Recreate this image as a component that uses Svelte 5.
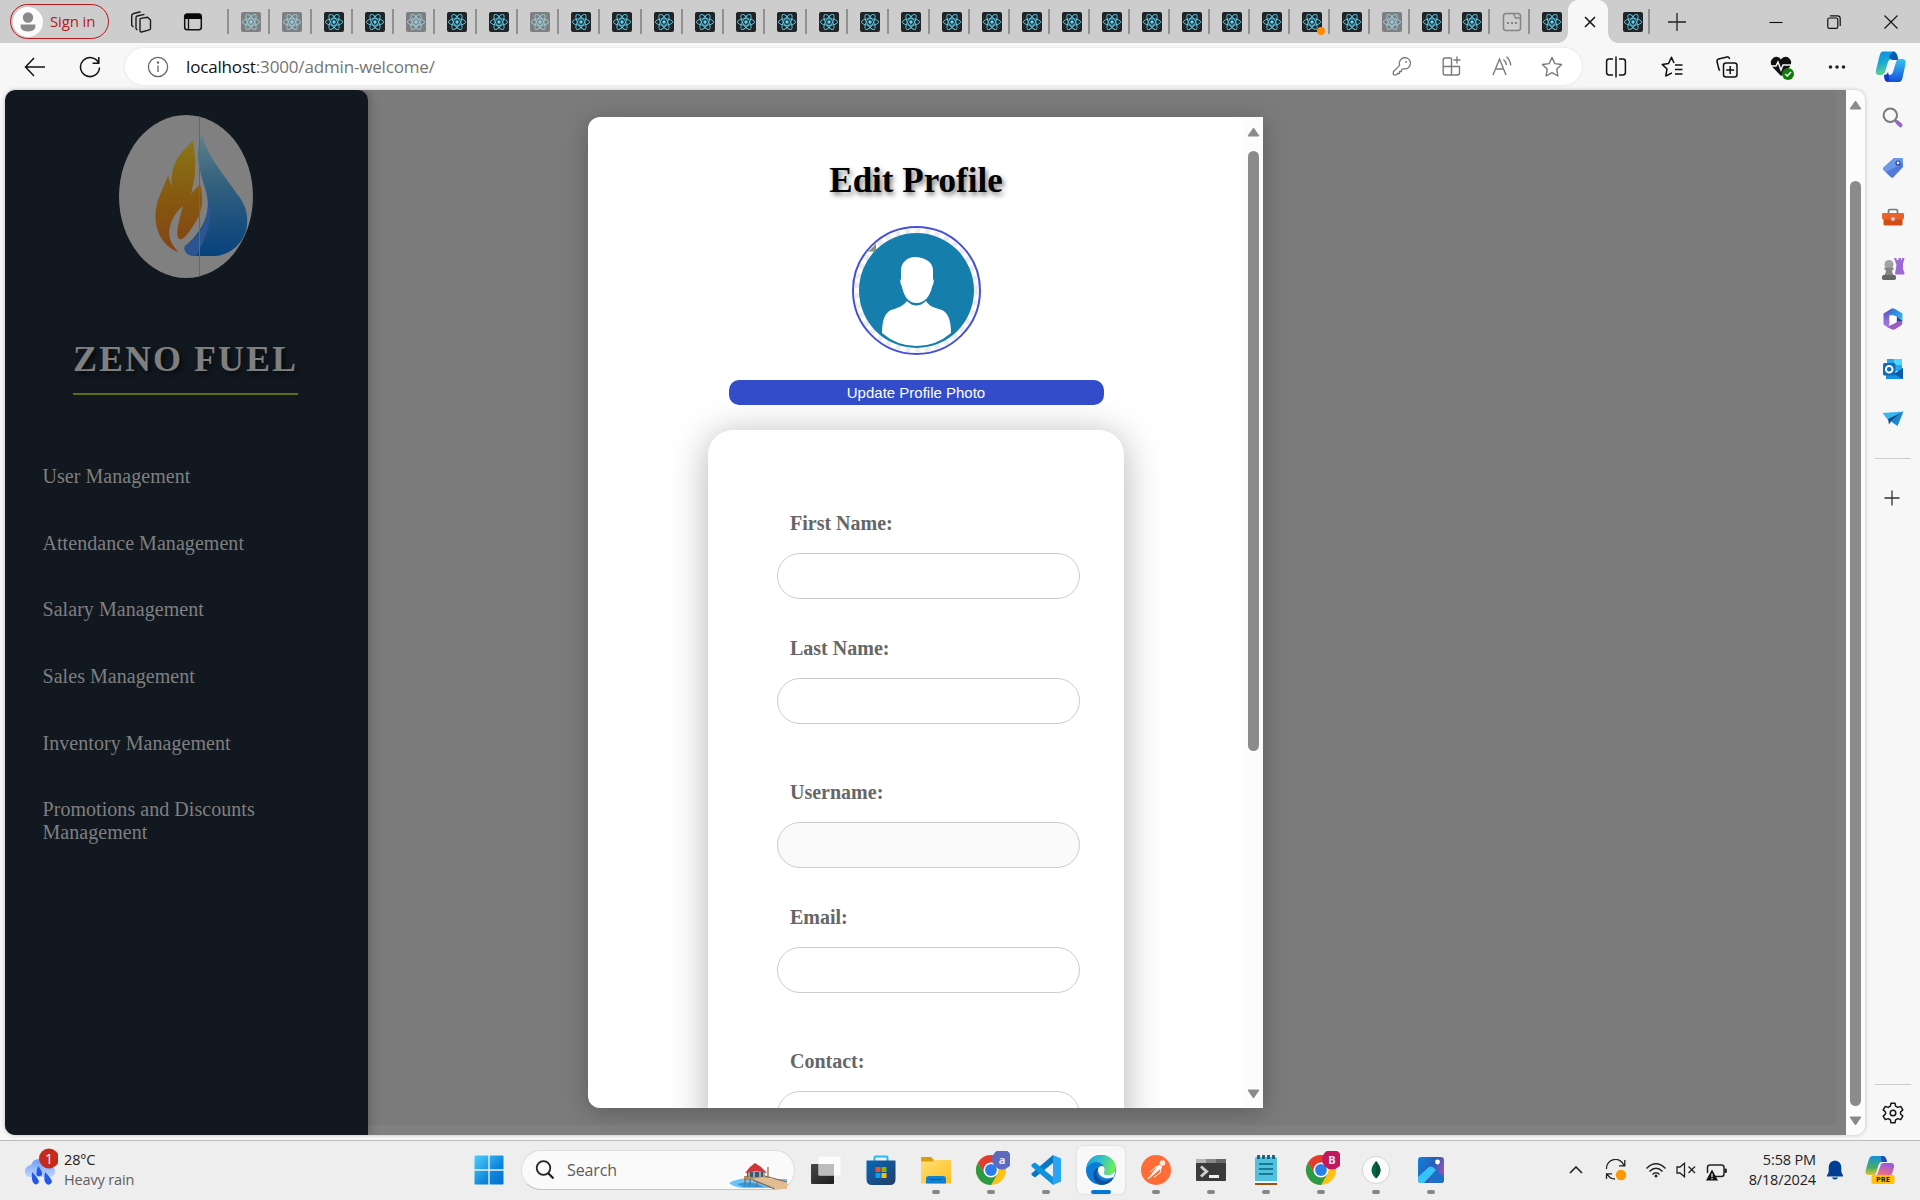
<script>
  const dimmed = new Set([0, 1, 4, 7, 28]);
  const tabs = Array.from({ length: 33 }, (_, i) => ({
    kind: i === 31 ? 'page' : 'react',
    dim: dimmed.has(i),
    dot: i === 26,
    wide: i < 17
  }));
  const menu = [
    'User Management',
    'Attendance Management',
    'Salary Management',
    'Sales Management',
    'Inventory Management',
    'Promotions and Discounts Management'
  ];
  const fields = [
    { label: 'First Name:' },
    { label: 'Last Name:', last: true },
    { label: 'Username:', readonly: true },
    { label: 'Email:', last: true },
    { label: 'Contact:' }
  ];
  const apps = ['taskview', 'store', 'explorer', 'chromeA', 'vscode', 'edge', 'postman', 'terminal', 'notepad', 'chromeB', 'mongo', 'photos'];
  const sideApps = ['search', 'tag', 'toolbox', 'chess', 'm365', 'outlook', 'plane'];
</script>

{#snippet react()}
  <svg width="20" height="20" viewBox="0 0 20 20">
    <rect width="20" height="20" rx="2" fill="#212327" />
    <g fill="none" stroke="#5ccbe6" stroke-width="0.9">
      <ellipse cx="10" cy="10" rx="8.6" ry="3.3" />
      <ellipse cx="10" cy="10" rx="8.6" ry="3.3" transform="rotate(60 10 10)" />
      <ellipse cx="10" cy="10" rx="8.6" ry="3.3" transform="rotate(120 10 10)" />
    </g>
    <circle cx="10" cy="10" r="1.7" fill="#61dafb" />
  </svg>
{/snippet}

{#snippet chrome(letter, color)}
  <svg width="38" height="38" viewBox="-19 -19 38 38">
    <circle r="15" fill="#fbc116" />
    <path d="M-13 -7.5A15 15 0 0 1 13 -7.5L0 -7.5L-6.5 3.7Z" fill="#e33b2e" />
    <path d="M-13 -7.5A15 15 0 0 0 0 15L6.5 3.7L-6.5 3.7Z" fill="#2a9a47" />
    <circle r="7.5" fill="#fff" />
    <circle r="5.9" fill="#2b7de9" />
    <circle cx="11" cy="-10.500" r="10" fill={color} />
    <text x="11" y="-6.500" text-anchor="middle" class="avatar-letter">{letter}</text>
  </svg>
{/snippet}

<div class="screen">
  <header class="tabbar">
    <div class="signin">
      <svg width="30" height="30" viewBox="0 0 30 30">
        <circle cx="15" cy="15" r="15" fill="#fbfbfb" />
        <circle cx="15" cy="10.5" r="5.2" fill="#8c8a89" />
        <path d="M7.5 17.5H22.5Q23 24.5 15 24.5Q7 24.5 7.5 17.5Z" fill="#8c8a89" />
      </svg>
      <span>Sign in</span>
    </div>
    <svg class="workspaces" width="24" height="24" viewBox="0 0 24 24" fill="none" stroke="#1b1b1b" stroke-width="1.4" stroke-linejoin="round">
      <path d="M11 9.5Q11 8.6 12 8.4L18.5 7.3L21.5 10V18.5Q21.5 19.6 20.4 19.8L12.5 22Q11 22.3 11 20.6Z" />
      <path d="M8.5 20L7 18.8V7.5Q7 6.3 8.3 6L15.5 4.4" />
      <path d="M4.5 17L2.7 15.5V5.5Q2.7 4.2 4 3.8L11.5 1.8" />
    </svg>
    <svg class="tabaction" width="20" height="20" viewBox="0 0 20 20">
      <rect x="1.7" y="2.2" width="16.6" height="15.6" rx="2.5" fill="none" stroke="#111" stroke-width="1.5" />
      <path d="M1.5 7V4Q1.5 1.6 4 1.6H16Q18.5 1.6 18.5 4V7Z" fill="#080808" />
      <path d="M5.5 7V18" stroke="#111" stroke-width="1.3" />
    </svg>
    <div class="tabs">
      {#each tabs as tab, i}
        <div class="tab" class:wide={tab.wide}>
          <div class="favicon" class:dim={tab.dim}>
            {#if tab.kind === 'react'}
              {@render react()}
            {:else}
              <svg width="20" height="20" viewBox="0 0 20 20" fill="none" stroke="#858585" stroke-width="1.5">
                <path d="M1.5 4Q1.5 1.5 4 1.5H11.5L13.5 6H18.5V16Q18.5 18.5 16 18.5H4Q1.5 18.5 1.5 16Z M12 1.5H16Q18.5 1.5 18.5 4V6" />
                <path d="M5 11h2M9 11h2M13 11h2" stroke-width="2" />
              </svg>
            {/if}
            {#if tab.dot}<i class="dot"></i>{/if}
          </div>
        </div>
      {/each}
      <div class="tab active">
        <svg width="12" height="12" viewBox="0 0 12 12" stroke="#111" stroke-width="1.5"><path d="M1 1L11 11M11 1L1 11" /></svg>
      </div>
      <div class="tab plain"><div class="favicon">{@render react()}</div></div>
      <div class="tab end">
        <svg width="18" height="18" viewBox="0 0 18 18" stroke="#222" stroke-width="1.3"><path d="M9 0V18M0 9H18" /></svg>
      </div>
    </div>
    <div class="winctl">
      <svg width="14" height="14" viewBox="0 0 14 14" stroke="#111" stroke-width="1.1"><path d="M0.5 7.5H13.5" /></svg>
      <svg width="14" height="14" viewBox="0 0 14 14" fill="none" stroke="#111" stroke-width="1.2"><rect x="0.8" y="3" width="10" height="10.3" rx="1.6" /><path d="M3 0.8H10.5Q13.2 0.8 13.2 3.5V11" /></svg>
      <svg width="14" height="14" viewBox="0 0 14 14" stroke="#111" stroke-width="1.1"><path d="M0.5 0.5L13.5 13.5M13.5 0.5L0.5 13.5" /></svg>
    </div>
  </header>

  <div class="toolbar">
    <svg class="back" width="22" height="20" viewBox="0 0 22 20" fill="none" stroke="#111" stroke-width="1.5"><path d="M21 10H1.5M10 1L1.5 10L10 19" /></svg>
    <svg class="reload" width="22" height="22" viewBox="0 0 22 22" fill="none" stroke="#111" stroke-width="1.5"><path d="M19.6 7A9.5 9.5 0 1 0 20.5 11.5M19.8 1V7.2H13.6" /></svg>
    <div class="address">
      <svg width="22" height="22" viewBox="0 0 22 22" fill="none" stroke="#666" stroke-width="1.3"><circle cx="11" cy="11" r="9.6" /><path d="M11 9.5V16" /><circle cx="11" cy="6.6" r="0.6" fill="#666" /></svg>
      <span class="url"><b>localhost</b>:3000/admin-welcome/</span>
      <div class="addr-icons">
        <svg width="20" height="20" viewBox="0 0 20 20" fill="none" stroke="#7a7a7a" stroke-width="1.3" stroke-linejoin="round"><path d="M12.5 1.5A6 6 0 0 1 18.5 7.2A5.6 5.6 0 0 1 11.5 12.7L9.5 13.8V15.5H7.5V17.5H5.5L4.5 18.8H2Q1.3 18.8 1.3 18V15.8L7.6 9.4A6 6 0 0 1 12.5 1.5Z" /><circle cx="14" cy="6" r="0.9" fill="#7a7a7a" stroke="none" /></svg>
        <svg width="20" height="20" viewBox="0 0 20 20" fill="none" stroke="#7a7a7a" stroke-width="1.4"><path d="M9.5 2H3Q1.2 2 1.2 4V17Q1.2 19 3 19H15.5Q17.5 19 17.5 17V10.5H1.2M9.5 2V19M15 0.5V7.5M11.5 4H18.5" /></svg>
        <svg width="20" height="20" viewBox="0 0 20 20" fill="none" stroke="#7a7a7a" stroke-width="1.4"><path d="M1 19L7.5 3L14 19M3.5 13H11.5M11.5 3.5Q14 5.5 14.3 9M14.5 0.8Q18.3 4 18.7 9.5" /></svg>
        <svg width="22" height="22" viewBox="0 0 22 22" fill="none" stroke="#7a7a7a" stroke-width="1.4" stroke-linejoin="round"><path d="M11 1.5L13.9 7.6L20.6 8.5L15.7 13.2L16.9 20L11 16.7L5.1 20L6.3 13.2L1.4 8.5L8.1 7.6Z" /></svg>
      </div>
    </div>
    <div class="tools">
      <svg width="22" height="22" viewBox="0 0 22 22" fill="none" stroke="#111" stroke-width="1.5"><path d="M8 3H4Q1.6 3 1.6 5.4V16.6Q1.6 19 4 19H8M14 3H18Q20.4 3 20.4 5.4V16.6Q20.4 19 18 19H14M11 0.5V21.5" /></svg>
      <svg width="22" height="22" viewBox="0 0 22 22" fill="none" stroke="#111" stroke-width="1.5" stroke-linejoin="round"><path d="M13 7L10.5 1.2L7.6 7.4L1.2 8.4L6 13L4.8 20L11 16.8M14 9H21.5M14 13.5H21.5M14 18H21.5" /></svg>
      <svg width="22" height="22" viewBox="0 0 22 22" fill="none" stroke="#111" stroke-width="1.5"><path d="M4 14.5L3 13.5L1 5.5Q0.7 3.5 2.5 3L11 0.9Q13 0.6 13.7 3M7.5 9.5Q7.5 7 10 7H18.5Q21 7 21 9.5V18.5Q21 21 18.5 21H10Q7.5 21 7.5 18.5ZM14.2 10V18M10.2 14H18.2" /></svg>
      <svg width="26" height="26" viewBox="0 0 26 26"><path d="M12 22L3 12.5Q1 9.5 2.3 6.3Q4 3 7.4 2.7Q10.5 2.8 12 5.5Q13.5 2.8 16.6 2.7Q20 3 21.7 6.3Q23 9.5 21 12.5Z" fill="#101010" /><path d="M1 12H7L9 8L12 16L14 11H22" fill="none" stroke="#f7f7f7" stroke-width="1.5" /><circle cx="19" cy="20" r="6" fill="#107c10" /><path d="M16.2 20L18.3 22L22 18" fill="none" stroke="#fff" stroke-width="1.5" /></svg>
      <svg width="18" height="6" viewBox="0 0 18 6" fill="#222"><circle cx="2.5" cy="3" r="1.8" /><circle cx="9" cy="3" r="1.8" /><circle cx="15.5" cy="3" r="1.8" /></svg>
      <svg class="cop" width="32" height="32" viewBox="0 0 32 32">
        <defs>
          <linearGradient id="cpA" x1="0" y1="0" x2="0.3" y2="1"><stop offset="0" stop-color="#0a8fe0" /><stop offset="0.5" stop-color="#19a7d8" /><stop offset="1" stop-color="#63d68c" /></linearGradient>
          <linearGradient id="cpB" x1="0" y1="0" x2="0" y2="1"><stop offset="0" stop-color="#35c4f2" /><stop offset="1" stop-color="#1450d8" /></linearGradient>
        </defs>
        <path d="M8 0.5H18Q21 0.5 22 4L23 8H17Q14 8 13 11L10 21Q9 24 6 24H4Q0 24 1 19L4.5 5Q5.5 0.5 8 0.5Z" fill="url(#cpA)" />
        <path d="M18 0.5Q21 0.5 22 4L23.5 9H18Q15 9 14 5Z" fill="#075ab3" />
        <path d="M24 31H13Q10 31 9.5 28L9 24H14Q17 24 18 21L21 11Q22 8 25 8H27Q31.5 8 30.5 13L27.5 27Q26.5 31 24 31Z" fill="url(#cpB)" />
        <path d="M9 24Q12 24 13 21L14 25Q15 31 12 30.5Q10 30 9 24Z" fill="#1037cf" />
      </svg>
    </div>
  </div>

  <div class="middle">
    <div class="viewport">
      <div class="page">
        <nav class="sidebar">
          <svg class="logo" width="134" height="163" viewBox="0 0 134 163">
            <defs>
              <clipPath id="logoClip"><ellipse cx="67" cy="81.5" rx="67" ry="81.5" /></clipPath>
              <linearGradient id="flame" x1="0" y1="0" x2="0" y2="1"><stop offset="0" stop-color="#8a7517" /><stop offset="0.55" stop-color="#85570f" /><stop offset="1" stop-color="#844316" /></linearGradient>
              <linearGradient id="drop" x1="0" y1="0" x2="0" y2="1"><stop offset="0" stop-color="#63848f" /><stop offset="0.4" stop-color="#34617e" /><stop offset="1" stop-color="#07427c" /></linearGradient>
            </defs>
            <g clip-path="url(#logoClip)">
              <rect width="134" height="163" fill="#808080" />
              <path d="M83 17C84 35 105 60 118 79C128 91 130 103 127 116C122 132 107 142 92 141H77C69 141 64 137 66 131C75 125 88 108 89 92C90 76 77 55 79 35Z" fill="url(#drop)" />
              <path d="M89 80C94 94 93 114 77 141C69 141 64 137 66 131C82 122 90 104 89 80Z" fill="#2a5590" />
              <path d="M74 26C76 42 79 52 72 79L81 69C85 83 84 98 74 111C69 119 64 126 60 124C56 120 60 105 64 91C54 99 48 113 51 124C53 130 57 134 59 137C43 131 34 113 37 94C39 81 45 73 49 60L53 73C51 52 58 40 74 26Z" fill="url(#flame)" />
              <path d="M80.5 0V163" stroke="#666" stroke-width="1" />
            </g>
          </svg>
          <h1>ZENO FUEL</h1>
          <ul>
            {#each menu as item}<li>{item}</li>{/each}
          </ul>
        </nav>
        <div class="backdrop">
          <section class="modal">
            <div class="modal-body">
              <h2>Edit Profile</h2>
              <svg class="avatar" width="129" height="129" viewBox="0 0 129 129">
                <circle cx="64.5" cy="64.5" r="63.5" fill="#fff" stroke="#4650d6" stroke-width="2" />
                <circle cx="64.5" cy="64.5" r="59.8" fill="none" stroke="#ececec" stroke-width="4.5" stroke-dasharray="5 5" />
                <circle cx="64.5" cy="64.5" r="57.5" fill="#167eac" />
                <path d="M63 31C72 31 81 36 81 44V53Q83 55 80 61C78 70 73 77 64.500 77C56 77 52 70 50 61Q47 55 49 53V44C49 37 55 31 63 31Z" fill="#fff" />
                <path d="M55 75Q64 84 74 75C78 81 83 82 90 84Q99 88 99 107Q84 120 64.5 120Q45 120 30 107Q30 88 39 84C46 82 51 80 55 75Z" fill="#fff" />
                <path d="M17 25L24 18V25Z" fill="#799b6d" /><path d="M23 18V25H16" stroke="#888" fill="none" stroke-width="1" />
              </svg>
              <button>Update Profile Photo</button>
              <form>
                {#each fields as f}
                  <div class="field" class:last={f.last}>
                    <span class="label">{f.label}</span>
                    <div class="input" class:readonly={f.readonly}></div>
                  </div>
                {/each}
              </form>
            </div>
            <div class="scroll modal-scroll">
              <svg width="13" height="10" viewBox="0 0 13 10"><path d="M6.5 1L12 9H1Z" fill="#8b8b8b" stroke="#8b8b8b" stroke-linejoin="round" /></svg>
              <div class="thumb"></div>
              <svg class="down" width="13" height="10" viewBox="0 0 13 10"><path d="M6.5 9L12 1H1Z" fill="#8b8b8b" stroke="#8b8b8b" stroke-linejoin="round" /></svg>
            </div>
          </section>
        </div>
      </div>
      <div class="scroll page-scroll">
        <svg width="13" height="10" viewBox="0 0 13 10"><path d="M6.5 1L12 9H1Z" fill="#8b8b8b" stroke="#8b8b8b" stroke-linejoin="round" /></svg>
        <div class="thumb"></div>
        <svg class="down" width="13" height="10" viewBox="0 0 13 10"><path d="M6.5 9L12 1H1Z" fill="#8b8b8b" stroke="#8b8b8b" stroke-linejoin="round" /></svg>
      </div>
    </div>

    <aside class="edgebar">
      {#each sideApps as app}
        <div class="side-cell">
          {#if app === 'search'}
            <svg width="22" height="22" viewBox="0 0 22 22" fill="none"><circle cx="8.3" cy="8.3" r="6.7" stroke="#7a7a7a" stroke-width="2" /><path d="M13 13L15.5 15.5" stroke="#777" stroke-width="2" /><path d="M15.3 15.3L18.500 18.300" stroke="#9a62cf" stroke-width="4" stroke-linecap="round" /></svg>
          {:else if app === 'tag'}
            <svg width="22" height="22" viewBox="0 0 22 22"><path d="M12 1H19.5Q21 1 21 2.5V10L11.5 20.2Q10 21.3 8.5 20L1.5 13Q0.5 11.5 1.8 10.3Z" fill="#527bd8" /><path d="M12 1H19.5Q21 1 21 2.5V6L4 15L1.5 12.5Q0.5 11.5 1.8 10.3Z" fill="#6c98e9" /><circle cx="16" cy="6" r="2" fill="#e8f0ff" stroke="#234090" stroke-width="1.2" /></svg>
          {:else if app === 'toolbox'}
            <svg width="24" height="22" viewBox="0 0 24 22"><path d="M7.5 7V4Q7.5 2.5 9 2.5H15Q16.5 2.5 16.5 4V7" fill="none" stroke="#777" stroke-width="1.7" /><path d="M2.5 11H21.5V17Q21.5 18.5 20 18.5H4Q2.5 18.5 2.5 17Z" fill="#d54b16" /><rect x="1" y="6" width="22" height="6.5" rx="1.4" fill="#e9622b" /><circle cx="12" cy="12" r="2.1" fill="#cfcfcf" /></svg>
          {:else if app === 'chess'}
            <svg width="24" height="24" viewBox="0 0 24 24"><path d="M13 1H15.5V3H17.5V1H20V3H21V1H23.5L22 7V12L23.5 16Q23.5 17.5 22 17.5H15Q13.5 17.5 14.5 14L15.5 8Z" fill="#9d6ad4" /><circle cx="8" cy="7.5" r="4.5" fill="#a2a2a2" /><path d="M3.5 10.5H12.5V13H11Q11 17 13 18.5H3Q5 17 5 13H3.5Z" fill="#858585" /><rect x="1" y="18" width="14" height="5" rx="1.8" fill="#666" /></svg>
          {:else if app === 'm365'}
            <svg width="22" height="24" viewBox="0 0 22 24">
              <defs>
                <linearGradient id="mA" x1="0" y1="0" x2="0" y2="1"><stop offset="0" stop-color="#4b56c4" /><stop offset="1" stop-color="#b07ae0" /></linearGradient>
                <linearGradient id="mB" x1="0" y1="0" x2="1" y2="1"><stop offset="0" stop-color="#2c6fd0" /><stop offset="1" stop-color="#3cc0f0" /></linearGradient>
              </defs>
              <path d="M11 1.200L7.500 8V15L7 19.500L5 20L1.500 17.500V6.500L9 2Z" fill="url(#mA)" />
              <path d="M9 2Q11 0.800 13 2L20.500 6.500V14L14.500 9.500L7.500 8Z" fill="url(#mB)" />
              <path d="M20.500 14Q20.500 17.500 19 18.500L13 22.200Q11 23.200 9 22L5 20L14.500 15.500V9.500Z" fill="#9a5cc4" />
              <path d="M20.500 14L14.500 9.500V14Z" fill="#25408c" />
              <path d="M11 8L14.8 10V14.2L11 16.2L7.4 14.2V10Z" fill="#fff" />
            </svg>
          {:else if app === 'outlook'}
            <svg width="22" height="22" viewBox="0 0 22 22"><rect x="5" y="1" width="15" height="12" fill="#28a8ea" /><path d="M20 1V7H12V1Z" fill="#50d9ff" /><path d="M4 12L12 16L21 10V21H4Z" fill="#1490df" /><path d="M21 10V21L12 16Z" fill="#0a5aa8" /><rect x="1" y="5" width="12.5" height="12.5" rx="1.5" fill="#0f6cbd" /><circle cx="7.2" cy="11.2" r="3.3" fill="none" stroke="#fff" stroke-width="2" /></svg>
          {:else}
            <svg width="22" height="18" viewBox="0 0 22 18"><path d="M0.5 3L21.5 1.5L6 10Z" fill="#35b6ee" /><path d="M21.5 1.5L15.5 16L9 11.5Z" fill="#1389d8" /><path d="M6 9L21.5 1.5L9 11.5L7 14.5Z" fill="#124f90" /></svg>
          {/if}
        </div>
      {/each}
      <hr />
      <svg class="add" width="16" height="16" viewBox="0 0 16 16" stroke="#333" stroke-width="1.3"><path d="M8 0.5V15.5M0.5 8H15.5" /></svg>
      <hr class="bottom" />
      <svg class="gear" width="22" height="22" viewBox="0 0 22 22" fill="none" stroke="#161616" stroke-width="1.5" stroke-linejoin="round"><path d="M9 1.2H13L13.6 4.2L15.8 5.4L18.7 4.4L20.8 7.9L18.5 10V12L20.8 14.1L18.7 17.6L15.8 16.6L13.6 17.8L13 20.8H9L8.4 17.8L6.2 16.6L3.3 17.6L1.2 14.1L3.5 12V10L1.2 7.9L3.3 4.4L6.2 5.4L8.4 4.2Z" /><circle cx="11" cy="11" r="2.8" /></svg>
    </aside>
  </div>

  <footer class="taskbar">
    <div class="weather">
      <svg width="36" height="40" viewBox="0 0 36 40">
        <defs><linearGradient id="cloud" x1="0" y1="0" x2="0" y2="1"><stop offset="0" stop-color="#6f9cf5" /><stop offset="1" stop-color="#bcd5ff" /></linearGradient></defs>
        <path d="M9 29Q3 29 3 23.500Q3 18 9 17Q11 11 17 11Q24 11 26 17Q33 18 33 23.500Q33 29 27 29Z" fill="url(#cloud)" />
        <path d="M16 18Q21 24 20 27Q17 29.500 14.5 27Q14 24 16 18ZM10 24Q17 31 17 34Q15 38 12 35.500Q9 33 10 24ZM23 24Q30 31 30 34Q28 38 24.500 36Q21 33 23 24Z" fill="#2458ea" />
        <circle cx="27" cy="10.500" r="10" fill="#c42b1c" />
        <text x="27" y="15.500" text-anchor="middle" class="badge-text">1</text>
      </svg>
      <div><span class="temp">28°C</span><span class="cond">Heavy rain</span></div>
    </div>
    <svg class="start" width="30" height="30" viewBox="0 0 30 30">
      <defs><linearGradient id="win" x1="0" y1="0" x2="1" y2="1"><stop offset="0" stop-color="#4cd0fb" /><stop offset="0.6" stop-color="#0f86dd" /><stop offset="1" stop-color="#0070cf" /></linearGradient></defs>
      <path d="M0.5 1.500Q0.5 0.500 1.500 0.500H14.300V14.300H0.500ZM15.700 0.500H28.500Q29.500 0.500 29.500 1.500V14.300H15.700ZM0.500 15.700H14.300V29.500H1.500Q0.500 29.500 0.500 28.500ZM15.700 15.700H29.500V28.500Q29.500 29.500 28.500 29.500H15.700Z" fill="url(#win)" />
    </svg>
    <div class="search">
      <svg width="20" height="20" viewBox="0 0 20 20" fill="none" stroke="#222"><circle cx="8.500" cy="8" r="6.800" stroke-width="1.800" /><path d="M13 13L18.500 18.500" stroke-width="2.300" /></svg>
      <span>Search</span>
      <svg class="pier" width="58" height="27" viewBox="0 0 58 27">
        <path d="M0 21Q10 15 24 17L58 17V26H14Q4 25 0 21Z" fill="#6fc3f4" />
        <path d="M8 22Q22 18 35 25H14Z" fill="#2f9ae4" />
        <path d="M15 14H38V18H15Z" fill="#b88a5c" />
        <path d="M18 10H36V15H18Z" fill="#33597f" />
        <path d="M20 10V15M25 10V15M31 10V15M35 10V15" stroke="#dfb98c" stroke-width="1.500" />
        <path d="M16 11L21 5L26 1L32 5L38 11Q27 8 16 11Z" fill="#d3343a" />
        <path d="M23 17L34 15L58 20V27H48Z" fill="#e3bd91" />
        <path d="M24 18L46 27M36 14L58 20M16 17V23M21 17V24M28 19V25M39 5V16" stroke="#8a6450" stroke-width="1.200" />
      </svg>
    </div>
    <div class="apps">
      {#each apps as app}
        <div class="app" class:current={app === 'edge'} class:running={app !== 'taskview' && app !== 'store'}>
          {#if app === 'taskview'}
            <svg width="32" height="30" viewBox="0 0 32 30"><defs><linearGradient id="tv" x1="0" y1="0" x2="1" y2="1"><stop offset="0" stop-color="#484848" /><stop offset="1" stop-color="#1c1c1c" /></linearGradient></defs><rect x="1" y="9" width="23" height="20" rx="1" fill="url(#tv)" /><rect x="8.500" y="1.500" width="22" height="19" rx="1" fill="#fff" opacity=".82" /><rect x="8.500" y="9" width="15.500" height="11.500" fill="#bcbcbc" /></svg>
          {:else if app === 'store'}
            <svg width="30" height="30" viewBox="0 0 30 30"><defs><linearGradient id="st" x1="0" y1="0" x2="1" y2="1"><stop offset="0" stop-color="#0868b8" /><stop offset="1" stop-color="#243b66" /></linearGradient></defs><path d="M8.500 7V2.500Q8.500 1.500 9.500 1.500H20.500Q21.500 1.500 21.500 2.500V7" fill="none" stroke="#27b8f3" stroke-width="2" /><path d="M0.500 5.500H29.500V24Q29.500 30 24 30H6Q0.500 30 0.500 24Z" fill="url(#st)" /><path d="M9.500 12H14.500V17H9.500Z" fill="#f25022" /><path d="M15.500 12H20.500V17H15.500Z" fill="#7fba00" /><path d="M9.500 18H14.500V23H9.500Z" fill="#00a4ef" /><path d="M15.500 18H20.500V23H15.500Z" fill="#ffb900" /></svg>
          {:else if app === 'explorer'}
            <svg width="30" height="28" viewBox="0 0 30 28"><defs><linearGradient id="fo" x1="0" y1="0" x2="1" y2="1"><stop offset="0" stop-color="#ffdf72" /><stop offset="1" stop-color="#fdbf24" /></linearGradient></defs><path d="M0 8V2Q0 1 1 1H10L13 4L11 8Z" fill="#dd9c0b" /><path d="M0 5.500H12L14 4H29Q30 4 30 5V26.500Q30 27.500 29 27.500H1Q0 27.500 0 26.500Z" fill="url(#fo)" /><path d="M5 27.500V23Q5 20 8 20H22Q25 20 25 23V27.500Z" fill="#1080cf" /><path d="M9 23.500H21" stroke="#075496" /></svg>
          {:else if app === 'chromeA'}
            {@render chrome('a', '#5c6bc0')}
          {:else if app === 'chromeB'}
            {@render chrome('B', '#c2185b')}
          {:else if app === 'vscode'}
            <svg width="30" height="30" viewBox="0 0 30 30"><path d="M22 0L30 3.500V26.500L22 30Z" fill="#29a5f1" /><path d="M22 0L22 8L4 22.500L0.500 20V18.500Z" fill="#0878c5" /><path d="M22 30L22 22L4 7.500L0.500 9.500V11.500Z" fill="#1093df" /></svg>
          {:else if app === 'edge'}
            <svg width="30" height="30" viewBox="0 0 30 30"><defs><linearGradient id="eg" x1="0" y1="0" x2="1" y2="0.300"><stop offset="0" stop-color="#1c9be0" /><stop offset="0.500" stop-color="#34c1c9" /><stop offset="1" stop-color="#6bea5b" /></linearGradient></defs><circle cx="15" cy="15" r="15" fill="#0b7bd5" /><path d="M0.500 13Q3 0 15 0Q27 0 30 12Q30 20 21 20Q17 20 18 17Q20 14 17 10Q12 5 6 8Q2 10 0.500 13Z" fill="url(#eg)" /><path d="M12 13Q8 21 15 25Q21 28 28 22Q24 30 15 30Q7 27 7.500 19Q8 14 12 13Z" fill="#114f9c" /><path d="M12 15Q12 10.500 17 11Q20 14 18 17Q17 20 21 20Q26 20.500 29.500 16L28 22Q20 25 15.500 21.500Q12 19 12 15Z" fill="#f7f7f7" /></svg>
          {:else if app === 'postman'}
            <svg width="30" height="30" viewBox="0 0 30 30"><circle cx="15" cy="15" r="15" fill="#ff6c37" /><circle cx="21.500" cy="8" r="2.800" fill="#ffe9de" /><path d="M18 10L21 12L14 18L7 24Z" fill="#fff" stroke="#fff" /><path d="M16 11L9 17M20 13L19 18L13 22" stroke="#fff" stroke-width="1" fill="none" /></svg>
          {:else if app === 'terminal'}
            <svg width="30" height="24" viewBox="0 0 30 24"><rect y="1" width="30" height="22" rx="1" fill="#3b3b3b" /><path d="M0 5V2Q0 1 1 1H10V5Z" fill="#b6b6b6" /><path d="M10 1H20V5H10Z" fill="#888" /><path d="M20 1H29Q30 1 30 2V5H20Z" fill="#686868" /><path d="M5 8.500L10.500 13.500L5 18.500" fill="none" stroke="#cfcfcf" stroke-width="3" /><path d="M13 18.500H23" stroke="#f0f0f0" stroke-width="3" /></svg>
          {:else if app === 'notepad'}
            <svg width="22" height="30" viewBox="0 0 22 30"><rect y="2" width="22" height="25" rx="1.500" fill="#52c0df" /><path d="M0 26H22V28H0Z" fill="#f5f5f5" /><path d="M0 28H22V30H0Z" fill="#a0500a" /><path d="M4 9H18M4 14H18M4 19H18" stroke="#0b6080" stroke-width="1.700" /><path d="M3.500 0V4M8.500 0V4M13.500 0V4M18.500 0V4" stroke="#125f78" stroke-width="2.800" /></svg>
          {:else if app === 'mongo'}
            <svg width="30" height="30" viewBox="0 0 30 30"><circle cx="15" cy="15" r="13.600" fill="#fbfbfb" stroke="#d5d5d5" /><path d="M15 6Q19.500 11 19.500 15.500Q19 20 15 23.500Q11 20 10.500 15.500Q10.500 11 15 6Z" fill="#00684a" /><path d="M15 6Q19.500 11 19.500 15.500Q19 20 15 23.500Z" fill="#0c4f3a" /></svg>
          {:else}
            <svg width="26" height="26" viewBox="0 0 26 26"><defs><linearGradient id="ph" x1="0" y1="0" x2="1" y2="0.400"><stop offset="0" stop-color="#1282da" /><stop offset="0.600" stop-color="#2460b9" /><stop offset="1" stop-color="#9351b5" /></linearGradient></defs><rect width="26" height="26" rx="3" fill="url(#ph)" /><path d="M12 10Q13.500 9 15 10L26 20V23Q26 26 23 26H13Z" fill="#1c70c7" /><path d="M0 20L11 10Q13.500 8.500 16 11L18 13L6 26H3Q0 26 0 23Z" fill="#35c4f5" /><circle cx="19.500" cy="5" r="2.400" fill="#fff" /></svg>
          {/if}
        </div>
      {/each}
    </div>
    <div class="tray">
      <svg class="chev" width="14" height="8" viewBox="0 0 14 8" fill="none" stroke="#222" stroke-width="1.600"><path d="M1 7L7 1L13 7" /></svg>
      <svg class="sync" width="22" height="22" viewBox="0 0 22 22" fill="none" stroke="#222" stroke-width="1.300"><path d="M1.500 10A9 9 0 0 1 19 6.500M19.800 1V6.800H14M10 20Q5 20 2.500 15.500M1.500 20V14.800H7" /><circle cx="16" cy="16" r="5.200" fill="#ff9800" stroke="none" /></svg>
      <svg class="wifi" width="22" height="18" viewBox="0 0 22 18" fill="none" stroke="#222" stroke-width="1.500"><path d="M1.500 7.500Q11 -2 20.500 7.500M4.500 10.500Q11 4 17.500 10.500M7.500 13.500Q11 10 14.500 13.500" /><circle cx="11" cy="15" r="1.500" fill="#222" stroke="none" /></svg>
      <svg class="vol" width="20" height="16" viewBox="0 0 20 16" fill="none" stroke="#222" stroke-width="1.300"><path d="M1 5H4L8.500 1.200V14.800L4 11H1ZM12.500 4.500L19 11M19 4.500L12.500 11" /></svg>
      <svg class="bat" width="22" height="18" viewBox="0 0 22 18"><path d="M9 13.500H15.500Q18 13.500 18 11V4.500Q18 2 15.500 2H4Q1.500 2 1.500 4.500V10" fill="none" stroke="#222" stroke-width="1.500" /><path d="M18.500 5.500H20Q21 5.500 21 7.700Q21 10 20 10H18.500Z" fill="#222" /><path d="M6 6.500L12 17.500H0Z" fill="#111" /><path d="M6 10.500V14M6 15V16.300" stroke="#fff" stroke-width="1.200" /></svg>
      <div class="clock"><span>5:58 PM</span><span>8/18/2024</span></div>
      <svg class="bell" width="18" height="20" viewBox="0 0 18 20" fill="#003f92"><path d="M9 0.500Q15 1 15.300 7.500V12L17 15.500V16.500H1V15.500L2.700 12V7.500Q3 1 9 0.500ZM6 17.500H12Q11.500 19.500 9 19.500Q6.500 19.500 6 17.500Z" /></svg>
      <svg class="copilot" width="30" height="30" viewBox="0 0 30 30">
        <defs>
          <linearGradient id="c1" x1="0" y1="0" x2="0" y2="1"><stop offset="0" stop-color="#198fe0" /><stop offset="0.600" stop-color="#46ac67" /><stop offset="1" stop-color="#e3c52d" /></linearGradient>
          <linearGradient id="c2" x1="0.600" y1="0" x2="0.200" y2="1"><stop offset="0" stop-color="#9857e8" /><stop offset="1" stop-color="#fb756b" /></linearGradient>
        </defs>
        <path d="M8 1H18Q21 1 22 7H17Q14.500 7 13.500 10L11 18Q10.500 20 7 20H4Q0 20 0.500 16L4 4Q5 1 8 1Z" fill="url(#c1)" />
        <path d="M16 1H18Q21 1 22 7H17Q16 5 16 1Z" fill="#2048c4" />
        <path d="M12 20L16 9Q17 8 19 8H26Q29.500 8 29 12L27 19L25 21H12Z" fill="url(#c2)" />
        <rect x="6.500" y="20" width="23" height="9" rx="2" fill="#ffc20a" />
        <text x="18" y="27.200" text-anchor="middle" class="pre">PRE</text>
      </svg>
    </div>
  </footer>
</div>

<style>
  :global(body) { margin: 0; overflow: hidden; }
  .screen { width: 1920px; height: 1200px; display: flex; flex-direction: column; overflow: hidden; background: #f7f7f7; font-family: 'Open Sans', 'Noto Sans', sans-serif; }
  svg { display: block; flex: none; }
  * { box-sizing: border-box; }

  .tabbar { height: 43px; flex: none; background: #cdcdcd; display: flex; align-items: center; }
  .signin { width: 99px; height: 35px; margin-left: 10px; border: 1.5px solid #b3191e; border-radius: 18px; display: flex; align-items: center; padding-left: 2px; gap: 7px; color: #b3191e; font-size: 15px; letter-spacing: -0.150px; white-space: nowrap; }
  .signin span { padding-bottom: 2px; }
  .workspaces { margin-left: 20px; }
  .tabaction { margin-left: 30px; }
  .tabs { display: flex; margin-left: 24px; height: 43px; }
  .tab { width: 40px; height: 43px; display: flex; align-items: center; background: linear-gradient(#919191, #919191) 0 9px / 2px 25px no-repeat; padding-left: 14px; }
  .tab.wide { width: 41.25px; }
  .tab.plain { background: none; }
  .tab.active { background: #f7f7f7; border-radius: 10px 10px 0 0; position: relative; padding-left: 16px; }
  .tab.active::before, .tab.active::after { content: ''; position: absolute; bottom: 0; width: 10px; height: 10px; }
  .tab.active::before { left: -10px; background: radial-gradient(circle at 0 0, #cdcdcd 9.5px, #f7f7f7 10px); }
  .tab.active::after { right: -10px; background: radial-gradient(circle at 100% 0, #cdcdcd 9.5px, #f7f7f7 10px); }
  .tab.plain { padding-left: 15px; }
  .tab.end { padding-left: 20px; }
  .favicon { position: relative; }
  .favicon.dim { opacity: 0.45; }
  .dot { position: absolute; right: -3px; bottom: -3px; width: 8px; height: 8px; border-radius: 50%; background: #ff8c00; }
  .winctl { margin-left: auto; margin-right: 22px; display: flex; gap: 43.500px; }

  .toolbar { height: 47px; flex: none; display: flex; align-items: center; padding-top: 0; }
  .back { margin-left: 24px; }
  .reload { margin-left: 33px; }
  .address { margin-left: 24px; width: 1461px; height: 37px; border-radius: 19px; background: #fff; box-shadow: 0 0 3px #ddd; display: flex; align-items: center; padding-left: 22px; }
  .url { margin-left: 17px; font-size: 17px; letter-spacing: -0.160px; color: #747474; white-space: nowrap; }
  .url b { font-weight: 400; color: #111; }
  .addr-icons { margin-left: auto; margin-right: 5px; display: flex; }
  .addr-icons svg { margin: 0 15px; }
  .addr-icons svg:last-child { margin: 0 14px; }
  .tools { margin-left: 7px; display: grid; grid-template-columns: repeat(6, 55.200px); justify-items: center; align-items: center; }
  .cop { margin-right: 2px; }

  .middle { flex: none; height: 1050px; display: flex; }
  .viewport { margin-left: 5px; width: 1860px; height: 1045px; border-radius: 10px; overflow: hidden; display: flex; box-shadow: 0 0 4px #bbb; }
  .page { width: 1841px; background: #7b7b7b; display: flex; border-right: 10px solid #7f7f7f; border-bottom: 10px solid #808080; height: 1045px; }
  .sidebar { width: 363px; height: 1045px; flex: none; background: #111820; border-radius: 10px 10px 0 0; box-shadow: 0 0 12px rgba(0, 0, 0, 0.300); display: flex; flex-direction: column; align-items: center; color: #7f7f7f; font-family: 'Liberation Serif', serif; }
  .logo { margin: 25px 2px 0 0; }
  h1 { margin: 60px 2px 0 0; height: 57px; border-bottom: 2px solid #5f6c14; font-size: 36px; line-height: 42px; letter-spacing: 2px; white-space: nowrap; text-shadow: 3px 3px 5px rgba(0, 0, 0, 0.600); }
  ul { list-style: none; margin: 70px 0 0; padding: 0 68px 0 37.500px; width: 100%; display: flex; flex-direction: column; gap: 43.700px; font-size: 20px; letter-spacing: 0.050px; line-height: 23px; }
  .backdrop { flex: 1; padding: 27px 0 0 220px; }
  .modal { width: 675px; height: 991px; background: #fff; border-radius: 12px 0 0 12px; box-shadow: 0 4px 24px rgba(0, 0, 0, 0.250); display: flex; overflow: hidden; }
  .modal-body { width: 656px; overflow: hidden; display: flex; flex-direction: column; align-items: center; }
  h2 { margin: 43px 0 0; font: bold 35px/42px 'Liberation Serif', serif; font-variant-ligatures: none; color: #000; text-shadow: 2px 3px 5px rgba(0, 0, 0, 0.500); white-space: nowrap; }
  .avatar { margin-top: 24px; }
  button { margin-top: 25px; width: 375px; height: 25px; border: 0; padding: 0; border-radius: 10px; background: #334cc9; color: #fff; font: 15px/25px 'Liberation Sans', sans-serif; flex: none; }
  form { margin-top: 25px; width: 416px; height: 900px; flex: none; border-radius: 25px; background: #fff; box-shadow: 0 5px 38px rgba(0, 0, 0, 0.300); padding: 82px 0 0 69px; }
  .field { height: 125px; }
  .field.last { height: 144px; }
  .label { display: block; padding-left: 13px; font: bold 20px/23px 'Liberation Serif', serif; color: #666; }
  .input { margin-top: 18px; width: 303px; height: 46px; border: 1.250px solid #ccc; border-radius: 25px; }
  .input.readonly { background: #fafafa; }

  .scroll { width: 19px; flex: none; background: #fcfcfc; display: flex; flex-direction: column; align-items: center; }
  .thumb { width: 11px; border-radius: 6px; background: #8b8b8b; }
  .scroll > svg:first-child { margin-top: 10px; }
  .modal-scroll .thumb { margin-top: 14px; height: 600px; }
  .modal-scroll .down { margin-top: auto; margin-bottom: 9px; }
  .page-scroll .thumb { margin-top: 71px; height: 925px; }
  .page-scroll .down { margin-top: auto; margin-bottom: 9px; }

  .edgebar { width: 55px; height: 1050px; display: flex; flex-direction: column; align-items: center; padding-top: 3px; }
  .side-cell { height: 50.200px; width: 55px; flex: none; display: grid; place-items: center; }
  hr { margin: 14px 0 0; width: 36px; height: 1px; border: 0; background: #ccc; flex: none; }
  .add { margin: 31px 2px 0 0; }
  hr.bottom { margin-top: auto; }
  .gear { margin: 17px 0 16px; }

  .taskbar { height: 60px; flex: none; border-top: 1px solid #bbb; background: #eee; display: flex; align-items: center; padding-bottom: 1px; }
  .weather { margin-left: 22px; width: 452px; display: flex; align-items: center; gap: 6px; }
  .weather > svg { margin-top: -5px; }
  .weather div { display: flex; flex-direction: column; font-size: 14.500px; line-height: 20px; letter-spacing: -0.150px; padding-bottom: 1px; }
  .temp { color: #222; }
  .cond { color: #5d5d5d; }
  .badge-text { font-size: 14px; fill: #fff; }
  .search { margin-left: 17px; width: 274px; height: 40px; border: 1px solid #ddd; border-bottom-color: #c4c4c4; border-radius: 20px; background: #fafafa; display: flex; align-items: center; padding-left: 13px; font-size: 16px; color: #5c5c5c; }
  .search span { margin-left: 12px; letter-spacing: -0.100px; }
  .pier { margin-left: auto; margin-right: 7px; margin-top: 10px; }
  .apps { margin-left: 7px; display: flex; gap: 7px; }
  .app { position: relative; width: 48px; height: 48px; border-radius: 6px; display: grid; place-items: center; }
  .app.current { background: #f8f8f8; box-shadow: 0 0 2px #c8c8c8; }
  .app.running::after { content: ''; position: absolute; bottom: 0; left: 20px; width: 8px; height: 4px; border-radius: 2px; background: #868686; }
  .app.current::after { left: 14px; width: 20px; background: #0078d4; }
  .avatar-letter { font: bold 11px 'Open Sans', sans-serif; fill: #e9e9f5; }
  .tray { margin-left: auto; margin-right: 25px; display: flex; align-items: center; }
  .sync { margin-left: 22px; }
  .wifi { margin-left: 18px; }
  .vol { margin-left: 9px; }
  .bat { margin-left: 10px; margin-top: 3px; }
  .clock { width: 88px; display: flex; flex-direction: column; align-items: flex-end; font-size: 14.500px; line-height: 20px; color: #222; letter-spacing: -0.150px; padding-bottom: 1px; }
  .bell { margin-left: 10px; }
  .copilot { margin-left: 21px; }
  .pre { font: bold 7.500px 'Open Sans', sans-serif; fill: #222; }
</style>
